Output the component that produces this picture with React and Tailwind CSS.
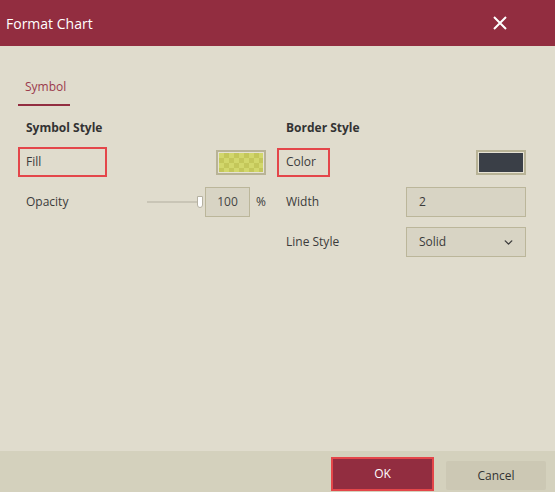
import { ChevronDown } from "lucide-react";

const Row = ({ children }) => (
  <div className="flex items-center justify-between h-[30px]">{children}</div>
);

const Swatch = ({ checker, color }) => (
  <div className="w-[50px] h-[25px] border-2 border-[#b8b396] p-[1px] bg-[#e6e2d4]">
    {checker ? (
      <div className="w-full h-full bg-[conic-gradient(#c4c75a_25%,#d2d76b_0_50%,#c4c75a_0_75%,#d2d76b_0)] bg-[length:10px_10px]"></div>
    ) : (
      <div className="w-full h-full" style={{ backgroundColor: color }}></div>
    )}
  </div>
);

export default function App() {
  return (
    <div
      className="w-[555px] h-[492px] flex flex-col bg-[#e0dccd] text-[#3b3b3b]"
      style={{ fontFamily: '"Open Sans", "Liberation Sans", sans-serif' }}
    >
      {/* Header */}
      <div className="h-[46px] bg-[#922d40] flex items-center justify-between pl-[6px] pr-[48px]">
        <span className="text-white text-[14px]">Format Chart</span>
        <svg width="14" height="14" viewBox="0 0 14 14" className="text-white">
          <path d="M1 1L13 13M13 1L1 13" stroke="currentColor" strokeWidth="2" />
        </svg>
      </div>

      {/* Body */}
      <div className="flex-1 pl-[18px]">
        <div className="mt-[32px] flex">
          <div className="w-[52px] border-b-2 border-[#922d40] pb-[9px] pl-[7px] text-[12px] leading-[17px] text-[#9b3a4c]">
            Symbol
          </div>
        </div>

        <div className="flex gap-[11px] mt-[13px]">
          {/* Symbol Style */}
          <div className="w-[248px] flex flex-col gap-[10px]">
            <div className="pl-[8px] text-[12px] font-bold leading-[17px] text-[#333] mb-[1px]">
              Symbol Style
            </div>
            <Row>
              <div className="w-[89px] h-[30px] border-2 border-[#e4464a] pl-[6px] flex items-center text-[12px]">
                Fill
              </div>
              <Swatch checker />
            </Row>
            <Row>
              <span className="pl-[8px] text-[12px]">Opacity</span>
              <div className="flex items-center">
                <div className="relative w-[58px] h-[12px] flex items-center">
                  <div className="w-[54px] h-[2px] bg-[#c9c5b6]"></div>
                  <div className="absolute right-[2px] top-0 w-[6px] h-[12px] bg-white border border-[#b5b1a2] rounded-b-[3px]"></div>
                </div>
                <div className="w-[45px] h-[30px] bg-[#d8d4c4] border border-[#bbb69a] flex items-center justify-center text-[12px] text-[#444]">
                  100
                </div>
                <span className="ml-[6px] w-[10px] text-[12px]">%</span>
              </div>
            </Row>
          </div>

          {/* Border Style */}
          <div className="w-[249px] flex flex-col gap-[10px]">
            <div className="pl-[9px] text-[12px] font-bold leading-[17px] text-[#333] mb-[1px]">
              Border Style
            </div>
            <Row>
              <div className="w-[53px] h-[29px] border-2 border-[#e4464a] pl-[7px] flex items-center text-[12px]">
                Color
              </div>
              <Swatch color="#3a3f47" />
            </Row>
            <Row>
              <span className="pl-[9px] text-[12px]">Width</span>
              <div className="w-[120px] h-[30px] bg-[#d8d4c4] border border-[#bbb69a] flex items-center pl-[12px] text-[12px]">
                2
              </div>
            </Row>
            <Row>
              <span className="pl-[9px] text-[12px]">Line Style</span>
              <div className="w-[120px] h-[30px] bg-[#d8d4c4] border border-[#bbb69a] flex items-center justify-between pl-[12px] pr-[10px] text-[12px]">
                <span>Solid</span>
                <ChevronDown size={13} strokeWidth={2.5} />
              </div>
            </Row>
          </div>
        </div>
      </div>

      {/* Footer */}
      <div className="h-[41px] bg-[#d4d1bd] flex items-end justify-end gap-[12px] pr-[9px] pb-[1px]">
        <button className="w-[103px] h-[34px] border-2 border-[#e4464a] bg-[#922d40] text-white text-[12px]">
          OK
        </button>
        <button className="w-[100px] h-[29px] mb-[1px] rounded-[2px] bg-[#ccc8b4] text-[#333] text-[12px]">
          Cancel
        </button>
      </div>
    </div>
  );
}
